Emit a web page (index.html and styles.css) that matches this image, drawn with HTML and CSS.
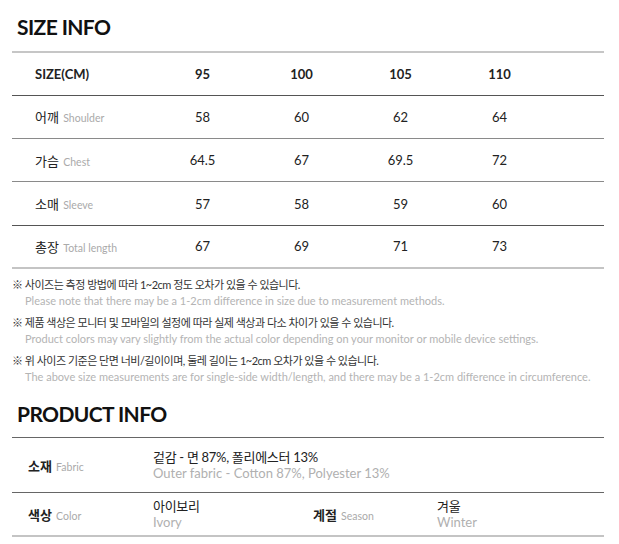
FILE: index.html
```html
<!DOCTYPE html>
<html lang="ko">
<head>
<meta charset="utf-8">
<link rel="stylesheet" href="styles.css">
</head>
<body>
<div class="page">
  <h2 class="title">SIZE INFO</h2>
  <div class="size-table">
    <div class="row head">
      <div class="label">SIZE(CM)</div>
      <div class="cell">95</div><div class="cell">100</div><div class="cell">105</div><div class="cell">110</div>
    </div>
    <div class="row line-mid">
      <div class="label">어깨 <span class="en">Shoulder</span></div>
      <div class="cell">58</div><div class="cell">60</div><div class="cell">62</div><div class="cell">64</div>
    </div>
    <div class="row line-mid">
      <div class="label">가슴 <span class="en">Chest</span></div>
      <div class="cell">64.5</div><div class="cell">67</div><div class="cell">69.5</div><div class="cell">72</div>
    </div>
    <div class="row line-dark">
      <div class="label">소매 <span class="en">Sleeve</span></div>
      <div class="cell">57</div><div class="cell">58</div><div class="cell">59</div><div class="cell">60</div>
    </div>
    <div class="row line-light">
      <div class="label">총장 <span class="en">Total length</span></div>
      <div class="cell">67</div><div class="cell">69</div><div class="cell">71</div><div class="cell">73</div>
    </div>
  </div>
  <div class="notes">
    <div class="note">
      <p class="ko">※ 사이즈는 측정 방법에 따라 1~2cm 정도 오차가 있을 수 있습니다.</p>
      <p class="en-note">Please note that there may be a 1-2cm difference in size due to measurement methods.</p>
    </div>
    <div class="note">
      <p class="ko">※ 제품 색상은 모니터 및 모바일의 설정에 따라 실제 색상과 다소 차이가 있을 수 있습니다.</p>
      <p class="en-note">Product colors may vary slightly from the actual color depending on your monitor or mobile device settings.</p>
    </div>
    <div class="note">
      <p class="ko">※ 위 사이즈 기준은 단면 너비/길이이며, 둘레 길이는 1~2cm 오차가 있을 수 있습니다.</p>
      <p class="en-note">The above size measurements are for single-side width/length, and there may be a 1-2cm difference in circumference.</p>
    </div>
  </div>
  <h2 class="title title2">PRODUCT INFO</h2>
  <div class="product">
    <div class="prow first">
      <div class="plabel">소재 <span class="en">Fabric</span></div>
      <div class="pvalue">
        <div class="kov">겉감 - 면 87%, 폴리에스터 13%</div>
        <div class="gray">Outer fabric - Cotton 87%, Polyester 13%</div>
      </div>
    </div>
    <div class="prow last">
      <div class="plabel">색상 <span class="en">Color</span></div>
      <div class="pvalue narrow">
        <div class="kov">아이보리</div>
        <div class="gray">Ivory</div>
      </div>
      <div class="plabel2">계절 <span class="en">Season</span></div>
      <div class="pvalue">
        <div class="kov">겨울</div>
        <div class="gray">Winter</div>
      </div>
    </div>
  </div>
</div>
</body>
</html>
```

FILE: styles.css
```css
* { box-sizing: border-box; }
html, body { margin: 0; padding: 0; background: #fff; }
body {
  font-family: Lato, "Noto Sans CJK KR", sans-serif;
  color: #222;
}
.page {
  width: 592px;
  margin-left: 12px;
}
.title {
  margin: 0;
  padding: 11px 0 0 5px;
  height: 51px;
  font-size: 21px;
  font-weight: 700;
  line-height: 32px;
  color: #111;
  letter-spacing: -0.6px;
}
.size-table {
  border-top: 2px solid #c6c6c6;
}
.row {
  display: grid;
  grid-template-columns: 141px 99px 99px 99px 99px 1fr;
  align-items: center;
  height: 43.4px;
  font-size: 13px;
  border-bottom: 1px solid #8a8a8a;
}
.row.head {
  font-weight: 700;
  border-bottom: 1px solid #555;
  height: 42.6px;
}
.row.line-dark { border-bottom-color: #555; }
.row.line-light { border-bottom: 2px solid #c4c4c4; }
.label {
  padding-left: 23px;
  white-space: nowrap;
}
.cell { text-align: center; }
.en {
  font-size: 10.5px;
  color: #aaa;
  font-weight: 400;
  margin-left: 1px;
}
.notes {
  padding-top: 8px;
}
.note { margin-bottom: 6px; }
.note p { margin: 0; white-space: nowrap; }
.ko {
  font-size: 11px;
  line-height: 16px;
  color: #333;
  letter-spacing: -0.5px;
}
.en-note {
  font-size: 11px;
  line-height: 16px;
  color: #b4b4b4;
  padding-left: 13px;
}
.title2 {
  padding-top: 8px;
  height: 46px;
  line-height: 30px;
}
.product {
  border-top: 1px solid #666;
}
.prow {
  display: flex;
  align-items: center;
  border-bottom: 1px solid #666;
  font-size: 13px;
}
.prow.first { height: 55px; }
.prow.last { height: 44px; border-bottom: 2px solid #c4c4c4; }
.plabel {
  width: 141px;
  padding-left: 16px;
  font-weight: 700;
  white-space: nowrap;
}
.plabel2 {
  width: 124px;
  font-weight: 700;
  white-space: nowrap;
}
.pvalue {
  line-height: 16px;
  white-space: nowrap;
}
.kov { letter-spacing: -0.3px; }
.pvalue.narrow { width: 160px; }
.gray { color: #b0b0b0; }
```
